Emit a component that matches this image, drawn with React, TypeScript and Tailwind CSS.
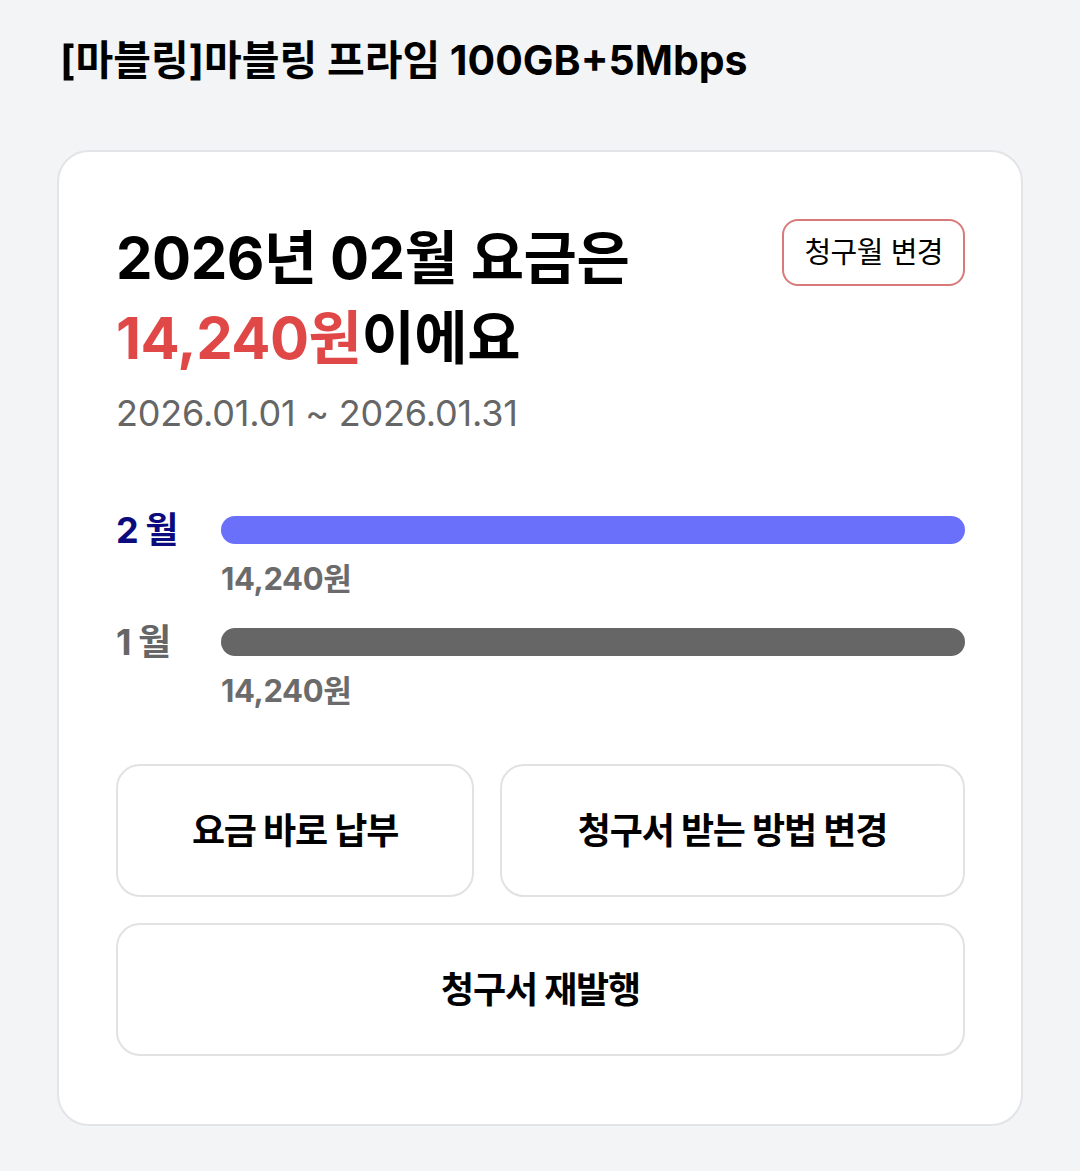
const months = [
  { label: "2 월", amount: "14,240원", labelClass: "text-[#0b0b7e]", barClass: "bg-[#6b70fa]" },
  { label: "1 월", amount: "14,240원", labelClass: "text-[#666666]", barClass: "bg-[#666666]" },
];

export default function App() {
  return (
    <div
      className="min-h-[1171px] bg-[#f3f4f6] px-[57px] pt-[30px]"
      style={{ fontFamily: 'Inter, "Noto Sans CJK KR", "Noto Sans", sans-serif' }}
    >
      {/* Plan title */}
      <h1 className="pl-[3px] text-[41px] font-bold leading-[60px] tracking-[0px] text-black">
        [마블링]마블링 프라임 100GB+5Mbps
      </h1>

      {/* Bill card */}
      <section className="mt-[60px] w-[966px] rounded-[32px] border-2 border-[#e3e4e8] bg-white pb-[68px] pl-[57px] pr-[56px] pt-[66px]">
        <div className="flex items-start justify-between">
          <div>
            <h2 className="text-[58px] font-bold leading-[80px] tracking-[-0.5px] text-black">
              2026년 02월 요금은
              <br />
              <span className="text-[#e04848]">14,240원</span>이에요
            </h2>
            <p className="mt-[10px] text-[36px] leading-[50px] tracking-[-0.2px] text-[#666666]">
              2026.01.01 ~ 2026.01.31
            </p>
          </div>
          <button className="mt-[1px] h-[67px] rounded-[16px] border-2 border-[#d97a7a] px-[20px] text-[29px] leading-none tracking-[-0.5px] text-black">
            청구월 변경
          </button>
        </div>

        {/* Monthly bars */}
        <div className="mt-[67px] flex flex-col">
          {months.map((m, i) => (
            <div key={i} className="flex flex-col pb-[14px]">
              <div className="flex items-center">
                <span className={`w-[105px] text-[36px] font-bold leading-[50px] tracking-[-1px] ${m.labelClass}`}>
                  {m.label}
                </span>
                <div className={`h-[28px] flex-1 rounded-full ${m.barClass}`} />
              </div>
              <span className="ml-[105px] text-[31px] font-bold leading-[48px] tracking-[-0.4px] text-[#6b6b6b]">
                {m.amount}
              </span>
            </div>
          ))}
        </div>

        {/* Actions */}
        <div className="mt-[35px] grid grid-cols-[358px_1fr] gap-[26px]">
          <button className="h-[133px] rounded-[24px] border-2 border-[#e2e2e2] text-[36px] font-bold tracking-[-1.2px] text-black">
            요금 바로 납부
          </button>
          <button className="h-[133px] rounded-[24px] border-2 border-[#e2e2e2] text-[36px] font-bold tracking-[-1.2px] text-black">
            청구서 받는 방법 변경
          </button>
          <button className="col-span-2 h-[133px] rounded-[24px] border-2 border-[#e2e2e2] text-[36px] font-bold tracking-[-1.2px] text-black">
            청구서 재발행
          </button>
        </div>
      </section>
    </div>
  );
}
